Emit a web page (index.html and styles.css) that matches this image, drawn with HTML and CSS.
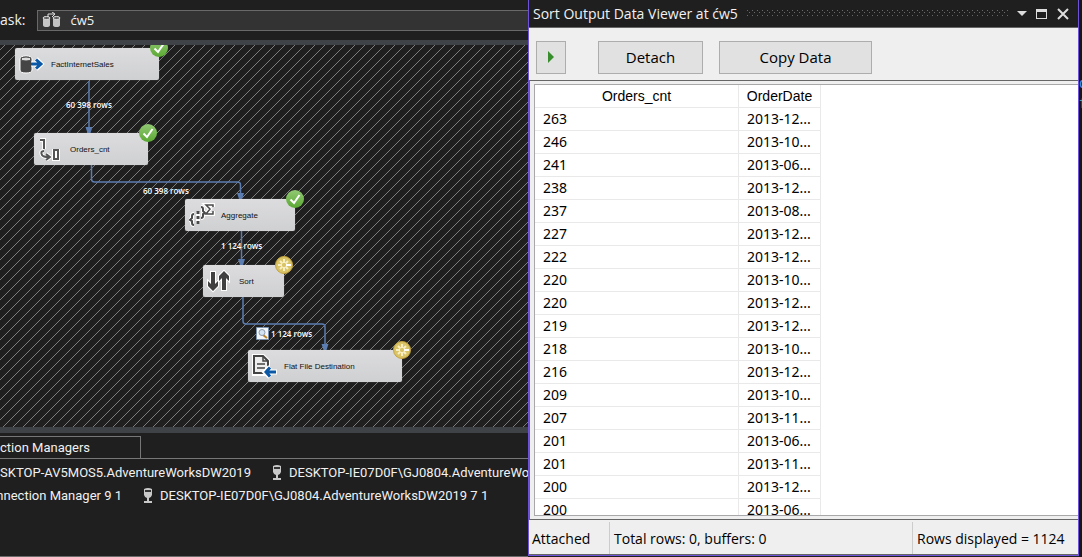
FILE: index.html
```html
<!DOCTYPE html>
<html lang="en">
<head>
<meta charset="utf-8">
<title>Data Flow</title>
<link rel="stylesheet" href="styles.css">
</head>
<body>
<div class="app">
  <main class="designer">
    <div class="task-bar">
      <label class="task-label" for="task">ask:</label>
      <div class="task-field">
        <svg class="task-icon" width="20" height="16" viewBox="0 0 20 16"><g fill="#c4c4c4"><path d="M1 6v7q0 2 3.500 2T8 13V6zM11 6v7q0 2 3.500 2t3.500-2V6z"/></g><g fill="#5a5a5a" stroke="#dedede"><ellipse cx="4.500" cy="6" rx="3.500" ry="1.500"/><ellipse cx="14.500" cy="6" rx="3.500" ry="1.500"/></g><path d="M6 5V2h6M10 0l3 2-3 3" fill="none" stroke="#ddd"/></svg>
        <select class="task-select" id="task"><option>ćw5</option></select>
      </div>
    </div>
    <section class="canvas" aria-label="Data flow">
      <svg class="wires" width="100%" height="100%">
        <defs>
          <pattern id="hatch" width="10" height="10" patternUnits="userSpaceOnUse"><path fill="#7c7c7c" shape-rendering="crispEdges" d="M4 0h1v1h-1zM3 1h1v1h-1zM2 2h1v1h-1zM1 3h1v1h-1zM0 4h1v1h-1zM9 5h1v1h-1zM8 6h1v1h-1zM7 7h1v1h-1zM6 8h1v1h-1zM5 9h1v1h-1z"/></pattern>
        </defs>
        <rect width="100%" height="100%" fill="url(#hatch)"/>
        <g fill="none" stroke="#5b7db1" stroke-width="1.500"><path d="M89 36v48M91.500 120v14q0 3 3 3h143q3 0 3 3v11M241.500 186v30M243 252v24q0 3 3 3h76q3 0 3 3v20"/></g>
        <path fill="#5b7db1" d="M85.500 82h7l-2 6h-3zM237 148h7l-2 6h-3zM238 214h7l-2 6h-3zM321.500 299h7l-2 6h-3z"/>
      </svg>
      <div class="node node-source">
        <svg class="node-icon" width="26" height="22" viewBox="0 0 26 22"><path d="M1 6v11q0 3 6 3t6-3V6q0-3-6-3T1 6z" fill="#454545" stroke="#fff"/><ellipse cx="7" cy="6" rx="5" ry="2" fill="#ddd" stroke="#454545"/><path d="M12 11h9M17 6l5 5-5 5" fill="none" stroke="#fff" stroke-width="5"/><path d="M12 11h9M17 6.500l5 4.500-5 4.500" fill="none" stroke="#0b58a6" stroke-width="3"/></svg>
        <span class="node-name">FactInternetSales</span>
        <svg class="badge" viewBox="0 0 18 18"><use href="#done"/></svg>
      </div>
      <div class="node node-derived">
        <svg class="node-icon" width="26" height="24" viewBox="0 0 26 24"><g fill="none" stroke="#fff" stroke-width="4"><path d="M2 3h4v9M6 14q-4 0-2 4 1 2 7 2M8 17l4 3-4 3M16 14h4v8h-4z"/></g><g fill="none" stroke="#555" stroke-width="2"><path d="M2 3h4v9M6 14q-4 0-2 4 1 2 7 2M8 17l4 3-4 3M16 13h4v9h-4z"/></g></svg>
        <span class="node-name">Orders_cnt</span>
        <svg class="badge" viewBox="0 0 18 18"><use href="#done"/></svg>
      </div>
      <div class="node node-aggregate">
        <svg class="node-icon" width="26" height="24" viewBox="0 0 26 24"><g fill="none" stroke="#fff" stroke-width="4"><path d="M5 11q-2 0-2 2v2l-2 2 2 1v2q0 2 2 2M12 4q2 0 2 2v2l2 2-2 1v2q0 2-2 2M25 4V2h-8l4 4-4 5h8V8M9 9v12"/></g><g fill="none" stroke="#4a4a4a" stroke-width="2"><path d="M5 11q-2 0-2 2v2l-2 2 2 1v2q0 2 2 2M12 4q2 0 2 2v2l2 2-2 1v2q0 2-2 2"/><path d="M24 4V2h-7l4 4-4 5h7V8" stroke-width="1.500"/><path d="M9 8v13" stroke-width="3" stroke-dasharray="3 2"/></g></svg>
        <span class="node-name">Aggregate</span>
        <svg class="badge" viewBox="0 0 18 18"><use href="#done"/></svg>
      </div>
      <div class="node node-sort">
        <svg class="node-icon" width="26" height="24" viewBox="0 0 26 24"><g fill="#404040" stroke="#fff" stroke-width="2" paint-order="stroke"><path d="M4 3h4v12l3-3v5l-5 5-5-5v-5l3 3zM15 21h4V9l3 3V7l-5-5-5 5v5l3-3z"/></g></svg>
        <span class="node-name">Sort</span>
        <svg class="badge" viewBox="0 0 18 18"><use href="#busy"/></svg>
      </div>
      <div class="node node-file">
        <svg class="node-icon" width="26" height="26" viewBox="0 0 26 26"><path d="M0 1h12l6 6v16H0z" fill="#fff"/><path d="M2 3h9l5 5v12H2z" fill="#eee" stroke="#444" stroke-width="2"/><path d="M11 3v5h5M5 11h8M5 15h8" fill="none" stroke="#444" stroke-width="1.500"/><path d="M25 19H14M18 14l-5 5 5 5" fill="none" stroke="#fff" stroke-width="5"/><path d="M24 19H14M18 14.500l-4 4.500 4 4.500" fill="none" stroke="#0b58a6" stroke-width="3"/></svg>
        <span class="node-name">Flat File Destination</span>
        <svg class="badge" viewBox="0 0 18 18"><use href="#busy"/></svg>
      </div>
      <span class="count count-source">60 398 rows</span>
      <span class="count count-derived">60 398 rows</span>
      <span class="count count-aggregate">1 124 rows</span>
      <span class="count count-sort"><svg width="13" height="13" viewBox="0 0 13 13"><path fill="#f4f7fa" stroke="#7890ad" d="M.5.5h12v12H.5z"/><path d="M7 8l4 3" stroke="#b98328" stroke-width="2"/><circle cx="6" cy="5.500" r="3" fill="#d3e4f5" stroke="#8c9aab"/></svg>1 124 rows</span>
    </section>
    <section class="managers">
      <div class="tabs"><button class="tab" type="button">ction Managers</button></div>
      <div class="connections">
        <div class="connection-row">
          <span class="connection first-wide">SKTOP-AV5MOS5.AdventureWorksDW2019</span>
          <span class="connection"><svg width="10" height="16" viewBox="0 0 10 16"><use href="#db"/></svg>DESKTOP-IE07D0F\GJ0804.AdventureWo</span>
        </div>
        <div class="connection-row">
          <span class="connection first-narrow">onnection Manager 9 1</span>
          <span class="connection"><svg width="10" height="16" viewBox="0 0 10 16"><use href="#db"/></svg>DESKTOP-IE07D0F\GJ0804.AdventureWorksDW2019 7 1</span>
        </div>
      </div>
    </section>
  </main>

  <section class="viewer">
    <header class="viewer-title">
      <h1 class="viewer-heading">Sort Output Data Viewer at ćw5</h1>
      <svg class="grip" height="7"><defs><pattern id="grip-dots" width="5" height="5" patternUnits="userSpaceOnUse"><path fill="#686868" d="M0 0h1v1H0zM2 2h1v1H2z"/></pattern></defs><rect width="100%" height="7" fill="url(#grip-dots)"/></svg>
      <button class="window-button" type="button" aria-label="Window options"><svg width="10" height="12" viewBox="0 0 10 12"><path fill="#ddd" d="M0 3h10L5 8z"/></svg></button>
      <button class="window-button" type="button" aria-label="Maximize"><svg width="12" height="12" viewBox="0 0 12 12"><path fill="#ddd" fill-rule="evenodd" d="M0 1h11v10H0zM1 4h9v6H1z"/></svg></button>
      <button class="window-button" type="button" aria-label="Close"><svg width="12" height="12" viewBox="0 0 12 12"><path stroke="#ddd" stroke-width="2" d="M1 1l10 10M11 1L1 11"/></svg></button>
    </header>
    <div class="viewer-tools">
      <button class="tool play" type="button" aria-label="Continue"><svg width="6" height="12" viewBox="0 0 6 12"><path fill="#388e2c" d="M0 0l6 6-6 6z"/></svg></button>
      <button class="tool detach" type="button">Detach</button>
      <button class="tool copy" type="button">Copy Data</button>
    </div>
    <div class="grid-area">
      <div class="grid">
        <table class="rows">
          <thead><tr><th class="col-count">Orders_cnt</th><th class="col-date">OrderDate</th></tr></thead>
          <tbody>
            <tr><td>263</td><td>2013-12...</td></tr>
            <tr><td>246</td><td>2013-10...</td></tr>
            <tr><td>241</td><td>2013-06...</td></tr>
            <tr><td>238</td><td>2013-12...</td></tr>
            <tr><td>237</td><td>2013-08...</td></tr>
            <tr><td>227</td><td>2013-12...</td></tr>
            <tr><td>222</td><td>2013-12...</td></tr>
            <tr><td>220</td><td>2013-10...</td></tr>
            <tr><td>220</td><td>2013-12...</td></tr>
            <tr><td>219</td><td>2013-12...</td></tr>
            <tr><td>218</td><td>2013-10...</td></tr>
            <tr><td>216</td><td>2013-12...</td></tr>
            <tr><td>209</td><td>2013-10...</td></tr>
            <tr><td>207</td><td>2013-11...</td></tr>
            <tr><td>201</td><td>2013-06...</td></tr>
            <tr><td>201</td><td>2013-11...</td></tr>
            <tr><td>200</td><td>2013-12...</td></tr>
            <tr><td>200</td><td>2013-06...</td></tr>
          </tbody>
        </table>
      </div>
    </div>
    <footer class="status">
      <span class="status-item state">Attached</span>
      <span class="status-item total">Total rows: 0, buffers: 0</span>
      <span class="status-item shown">Rows displayed = 1124</span>
    </footer>
  </section>
  <aside class="behind"><span class="code-a">d</span><span class="code-b">f</span></aside>
</div>

<svg class="symbols" width="0" height="0">
  <defs>
    <linearGradient id="green" x2="0" y2="1"><stop stop-color="#92c974"/><stop offset="1" stop-color="#5aa832"/></linearGradient>
    <g id="done"><circle cx="9" cy="9" r="9" fill="url(#green)"/><path d="M4.500 9.500L8 13l5.500-8" fill="none" stroke="#fff" stroke-width="2"/></g>
    <g id="busy"><circle cx="9" cy="9" r="8.500" fill="#d9c468" stroke="#c3a238"/><g stroke="#f8efc4" stroke-width="2"><path d="M9 3v4M9 11v4M3 9h4M5 5l2.500 2.500M10.500 10.500L13 13M13 5l-2.500 2.500M7.500 10.500L5 13"/><path d="M11 9h5" stroke="#fff"/></g></g>
    <g id="db"><path fill="#c8c8c8" d="M1 1q4-2 8 0v6q-1 3-3 3v3h3v2H1v-2h3v-3Q2 10 1 7z"/><path fill="#333" d="M2 2h6v2H2z"/></g>
  </defs>
</svg>
</body>
</html>
```
FILE: styles.css
```css
* { box-sizing: border-box; }
body { margin: 0; background: #1f1f1f; color: #f1f1f1; font-family: "Liberation Sans", Arial, sans-serif; }
button { margin: 0; padding: 0; border: 0; background: none; color: inherit; font: inherit; }
.app { display: grid; grid-template-columns: minmax(0, 528fr) minmax(0, 551fr) 3px; grid-template-rows: minmax(0, 1fr); height: 100vh; overflow: hidden; }
.symbols { position: absolute; }

.designer { display: flex; flex-direction: column; min-width: 0; overflow: hidden; border-bottom: 1px solid #6a6a6a; }
.task-bar { display: flex; align-items: center; gap: 12px; height: 40px; flex: none; font: 14px/20px "Open Sans", "Noto Sans", sans-serif; }
.task-field { display: flex; flex: 1; align-items: center; gap: 4px; height: 21px; padding-left: 4px; border: 1px solid #696969; border-right: 0; background: #333; }
.task-select { flex: 1; appearance: none; border: 0; padding: 0 4px; background: transparent; color: inherit; font: 13px/18px "Open Sans", "Noto Sans", sans-serif; }
.canvas { position: relative; flex: 1; min-height: 0; overflow: hidden; border-top: 5px solid #3f4347; }
.wires { display: block; }
.node { position: absolute; display: flex; align-items: center; height: 32px; border-radius: 2px; background: linear-gradient(#dcdcde, #cfd0d2); box-shadow: 0 0 1px #999; color: #111; padding-left: 4px; }
.node-icon { flex: none; }
.node-name { margin-left: 6px; padding-top: 2px; font-size: 8px; line-height: 12px; white-space: nowrap; }
.badge { position: absolute; top: -9px; right: -9px; width: 18px; height: 18px; }
.node-source { left: 15px; top: 3px; width: 144px; }
.node-derived { left: 34px; top: 88px; width: 114px; }
.node-aggregate { left: 185px; top: 154px; width: 110px; }
.node-sort { left: 203px; top: 220px; width: 81px; }
.node-file { left: 248px; top: 305px; width: 154px; }
.count { position: absolute; display: flex; align-items: center; gap: 2px; font: 600 8px/12px "Open Sans", "Noto Sans", sans-serif; color: #fff; white-space: nowrap; }
.count-source { left: 66px; top: 54px; }
.count-derived { left: 143px; top: 140px; }
.count-aggregate { left: 221px; top: 195px; }
.count-sort { left: 256px; top: 282px; }

.managers { flex: none; height: 129px; padding-top: 3px; border-top: 6px solid #3f4347; font-family: Roboto, "Liberation Sans", sans-serif; font-size: 13px; line-height: 22px; }
.tabs { display: flex; border-bottom: 1px solid #777; }
.tab { width: 141px; height: 22px; border: 1px solid #777; border-width: 1px 1px 0 0; text-align: left; line-height: 20px; }
.connections { padding-top: 3px; }
.connection-row { display: flex; gap: 21px; height: 23px; white-space: nowrap; }
.connection { display: flex; flex: none; align-items: center; gap: 7px; height: 22px; }
.first-wide, .first-narrow { justify-content: flex-end; }
.first-wide { width: 251px; }
.first-narrow { width: 122px; }

.viewer { display: flex; flex-direction: column; min-width: 0; margin-bottom: 1px; border: 1px solid #6f52dc; border-top: 0; background: #efefef; color: #000; font-family: "Open Sans", "Noto Sans", sans-serif; font-size: 14px; }
.viewer-title { display: flex; align-items: center; gap: 9px; height: 28px; flex: none; padding: 0 9px 0 4px; border-bottom: 1px solid #666; background: #1f1f1f; color: #f1f1f1; }
.viewer-heading { margin: 0; font-size: 14px; font-weight: 400; line-height: 20px; white-space: nowrap; }
.grip { flex: 1; min-width: 0; }
.window-button { display: flex; }
.viewer-tools { display: flex; flex: none; height: 53px; padding: 13px 7px 6px; border-bottom: 1px solid #666; }
.tool { height: 33px; padding-bottom: 2px; border: 1px solid #adadad; background: #e1e1e1; font-size: 15px; }
.play { width: 30px; margin-right: 32px; }
.detach { width: 105px; margin-right: 16px; }
.copy { width: 153px; }
.grid-area { flex: 1; min-height: 0; padding: 3px 0 3px 4px; border: 1px solid #666; border-width: 0 0 1px 1px; }
.grid { height: 100%; overflow: hidden; border: 1px solid #a8a8ab; border-right: 0; background: #fff; }
.rows { border-collapse: separate; border-spacing: 0; table-layout: fixed; width: 286px; line-height: 22px; }
.rows th, .rows td { height: 23px; padding: 0 0 0 8px; border: 1px solid #e9e9e9; border-width: 0 1px 1px 0; text-align: left; white-space: nowrap; }
.rows td { font-family: "Noto Sans", sans-serif; font-size: 14px; }
.rows th { padding: 0; text-align: center; font: 14px/22px "Liberation Sans", Arial, sans-serif; }
.col-count { width: 204px; }
.col-date { width: 82px; }
.status { display: flex; flex: none; height: 35px; padding-top: 2px; border-bottom: 1px solid #666; }
.status-item { display: flex; align-items: center; padding: 0 4px; white-space: nowrap; }
.state { width: 81px; padding-left: 3px; border-right: 1px solid #ccc; }
.total { flex: 1; }
.shown { width: 166px; border-left: 1px solid #ccc; }

.behind { display: flex; flex-direction: column; overflow: hidden; padding-top: 74px; background: #17171a; font: 14px/20px "Liberation Mono", monospace; }
.code-a { color: #3f9de0; }
.code-b { color: #3fa7b0; }
```
